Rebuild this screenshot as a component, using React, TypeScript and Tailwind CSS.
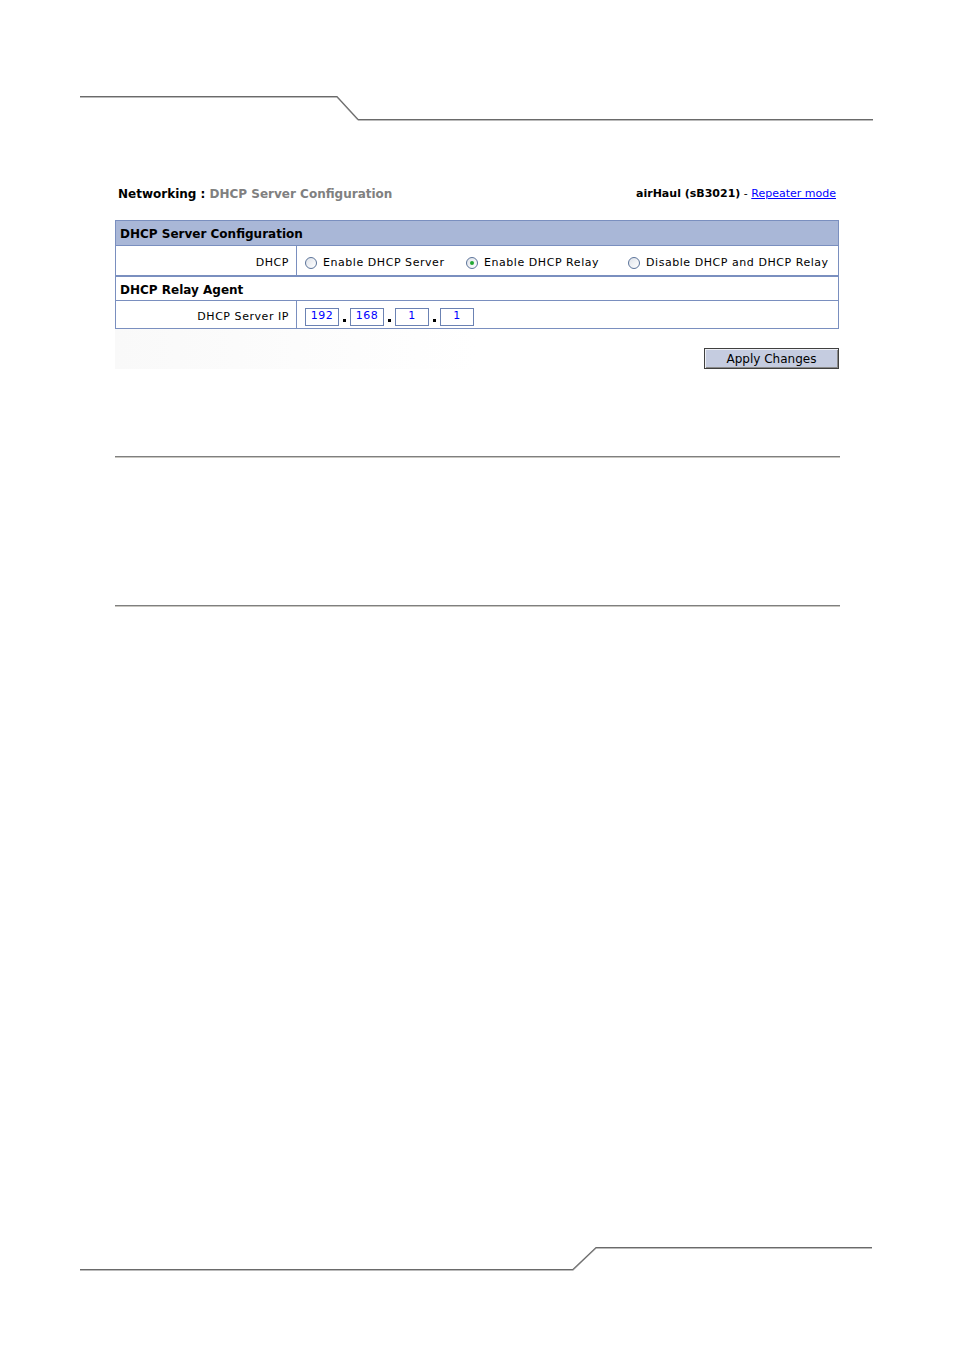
import React from 'react';

const font = { fontFamily: '"DejaVu Sans", Verdana, sans-serif' };

function Radio({ checked }: { checked?: boolean }) {
  return (
    <span className="inline-flex size-[12px] items-center justify-center rounded-full border border-[#5b7399] bg-gradient-to-br from-[#dfe3ea] to-white">
      {checked && <span className="size-[4px] rounded-full bg-[#22a833]" />}
    </span>
  );
}

function IpBox({ value }: { value: string }) {
  return (
    <span className="inline-flex h-[18px] w-[34px] items-center justify-center border border-[#6b82b3] bg-white text-[11px] tracking-[0.5px] text-[#0000ff]">
      {value}
    </span>
  );
}

function Dot() {
  return <span className="mx-[4px] mt-[8px] inline-block size-[3px] bg-black" />;
}

function Rule() {
  return (
    <div className="ml-[115px] w-[725px]">
      <div className="h-px bg-[#7f7f7f]" />
      <div className="h-px bg-[#c8c6c0]" />
    </div>
  );
}

export default function App() {
  return (
    <div className="flex h-[1351px] w-[954px] flex-col bg-white text-black" style={font}>
      {/* top page decoration */}
      <svg className="mt-[94px] block" width="954" height="28" viewBox="0 0 954 28">
        <polyline points="80,2.5 337,2.5 358,25.5 873,25.5" fill="none" stroke="#bbbbbb" strokeWidth="1" transform="translate(0,1)" />
        <polyline points="80,2.5 337,2.5 358,25.5 873,25.5" fill="none" stroke="#6a6a6a" strokeWidth="1.2" />
      </svg>

      {/* breadcrumb line */}
      <div className="mt-[64px] flex h-[16px] items-center justify-between pl-[118px] pr-[118px]">
        <div className="text-[12px] font-bold">
          Networking : <span className="text-[#808080]">DHCP Server Configuration</span>
        </div>
        <div className="text-[11px]">
          <span className="font-bold">airHaul (sB3021)</span> -{' '}
          <a className="text-[#0000ff] underline">Repeater mode</a>
        </div>
      </div>

      {/* config table */}
      <div className="ml-[115px] mt-[18px] w-[724px] border border-[#7a8fbf] text-[11px] tracking-[0.55px]">
        <div className="flex h-[25px] items-center border-b border-[#7a8fbf] bg-[#a9b7d7] pl-[4px] pt-[2px] text-[12px] font-bold tracking-normal">
          DHCP Server Configuration
        </div>
        <div className="flex h-[31px] border-b-2 border-[#7a8fbf]">
          <div className="flex w-[181px] items-center justify-end border-r border-[#7a8fbf] pr-[7px] pt-[5px]">DHCP</div>
          <div className="flex items-center pl-[8px] pt-[5px]">
            <label className="flex w-[161px] items-center gap-[6px]">
              <Radio /> Enable DHCP Server
            </label>
            <label className="flex w-[162px] items-center gap-[6px]">
              <Radio checked /> Enable DHCP Relay
            </label>
            <label className="flex items-center gap-[6px]">
              <Radio /> Disable DHCP and DHCP Relay
            </label>
          </div>
        </div>
        <div className="flex h-[24px] items-center border-b border-[#7a8fbf] pl-[4px] pt-[2px] text-[12px] font-bold tracking-normal">
          DHCP Relay Agent
        </div>
        <div className="flex h-[27px]">
          <div className="flex w-[181px] items-center justify-end border-r border-[#7a8fbf] pr-[7px] pt-[5px]">DHCP Server IP</div>
          <div className="flex items-center pl-[8px] pt-[4px]">
            <IpBox value="192" />
            <Dot />
            <IpBox value="168" />
            <Dot />
            <IpBox value="1" />
            <Dot />
            <IpBox value="1" />
          </div>
        </div>
      </div>

      {/* apply */}
      <div className="ml-[115px] flex h-[40px] w-[724px] items-center justify-end bg-gradient-to-r from-[#f9f9f9] via-white to-white">
        <button className="mt-[19px] h-[21px] w-[135px] border border-[#404040] bg-[#c5cce0] text-[12px] shadow-[inset_1px_1px_0_#eef0f6,inset_-1px_-1px_0_#8a8a8a]">
          Apply Changes
        </button>
      </div>

      <div className="mt-[87px]">
        <Rule />
      </div>
      <div className="mt-[147px]">
        <Rule />
      </div>

      {/* bottom page decoration */}
      <svg className="mt-auto mb-[79px] block" width="954" height="26" viewBox="0 0 954 26">
        <polyline points="80,23.5 573,23.5 596,1.5 872,1.5" fill="none" stroke="#bbbbbb" strokeWidth="1" transform="translate(0,1)" />
        <polyline points="80,23.5 573,23.5 596,1.5 872,1.5" fill="none" stroke="#6a6a6a" strokeWidth="1.2" />
      </svg>
    </div>
  );
}
